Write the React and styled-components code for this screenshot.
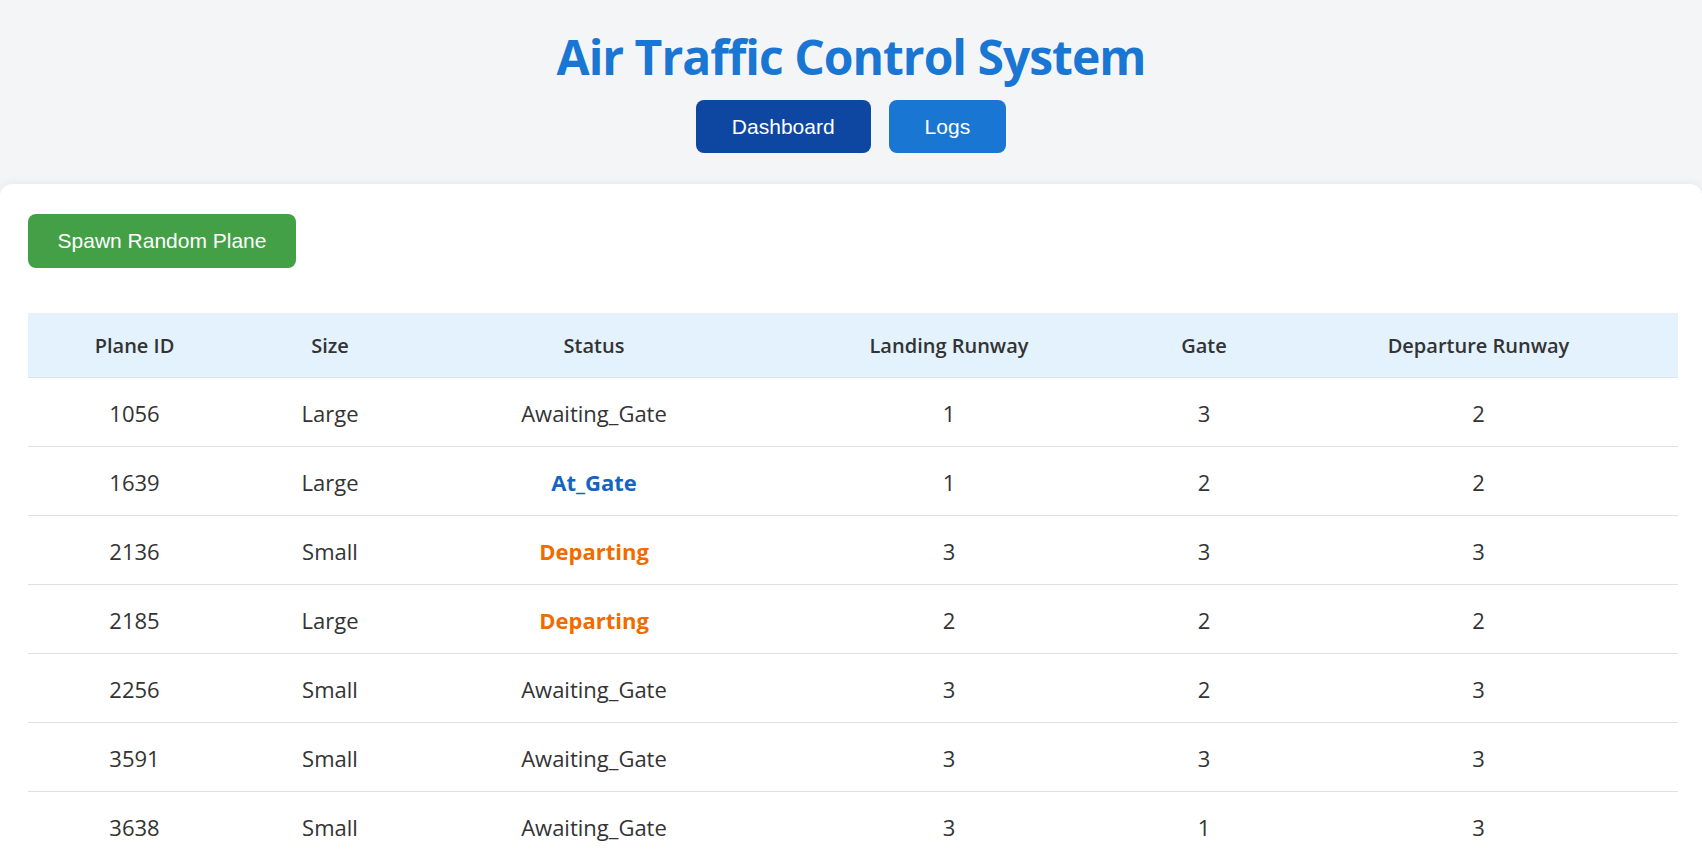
import React from "react";
import styled, { createGlobalStyle } from "styled-components";

const planes = [
  { id: 1056, size: "Large", status: "Awaiting_Gate", landing: 1, gate: 3, departure: 2 },
  { id: 1639, size: "Large", status: "At_Gate", landing: 1, gate: 2, departure: 2 },
  { id: 2136, size: "Small", status: "Departing", landing: 3, gate: 3, departure: 3 },
  { id: 2185, size: "Large", status: "Departing", landing: 2, gate: 2, departure: 2 },
  { id: 2256, size: "Small", status: "Awaiting_Gate", landing: 3, gate: 2, departure: 3 },
  { id: 3591, size: "Small", status: "Awaiting_Gate", landing: 3, gate: 3, departure: 3 },
  { id: 3638, size: "Small", status: "Awaiting_Gate", landing: 3, gate: 1, departure: 3 },
];

const columns = [
  { label: "Plane ID", width: 213 },
  { label: "Size", width: 178 },
  { label: "Status", width: 350 },
  { label: "Landing Runway", width: 360 },
  { label: "Gate", width: 150 },
  { label: "Departure Runway", width: 399 },
];

const statusColors = {
  At_Gate: "#1565c0",
  Departing: "#ef6c00",
};

const App = () => {
  return (
    <React.Fragment>
      <GlobalStyle />
      <Header>
        <Title>Air Traffic Control System</Title>
        <Nav>
          <NavButton active>Dashboard</NavButton>
          <NavButton>Logs</NavButton>
        </Nav>
      </Header>
      <Card>
        <SpawnButton>Spawn Random Plane</SpawnButton>
        <Table>
          <colgroup>
            {columns.map(c => (
              <col key={c.label} style={{ width: c.width }} />
            ))}
          </colgroup>
          <thead>
            <tr>
              {columns.map(c => (
                <HeadCell key={c.label}>{c.label}</HeadCell>
              ))}
            </tr>
          </thead>
          <tbody>
            {planes.map(p => (
              <tr key={p.id}>
                <Cell>{p.id}</Cell>
                <Cell>{p.size}</Cell>
                <Cell>
                  <Status color={statusColors[p.status]}>{p.status}</Status>
                </Cell>
                <Cell>{p.landing}</Cell>
                <Cell>{p.gate}</Cell>
                <Cell>{p.departure}</Cell>
              </tr>
            ))}
          </tbody>
        </Table>
      </Card>
    </React.Fragment>
  );
};

const GlobalStyle = createGlobalStyle`
  body {
    margin: 0;
    background: #f4f5f7;
    font-family: "Open Sans", "Noto Sans", sans-serif;
    color: #333;
  }
`;

const Header = styled("header")`
  display: flex;
  flex-direction: column;
  align-items: center;
  padding: 25px 0 31px;
`;

const Title = styled("h1")`
  margin: 0 0 11px;
  font-size: 48px;
  line-height: 64px;
  font-weight: 700;
  color: #1976d2;
  letter-spacing: -1px;
`;

const Nav = styled("nav")`
  display: flex;
  gap: 18px;
`;

const NavButton = styled("button")`
  height: 53px;
  padding: 0 36px;
  border: none;
  border-radius: 8px;
  background: ${props => (props.active ? "#0d47a1" : "#1976d2")};
  color: #fff;
  font-family: "Liberation Sans", Arial, sans-serif;
  font-size: 21px;
`;

const Card = styled("main")`
  background: #fff;
  border-radius: 12px 12px 0 0;
  box-shadow: 0 -2px 10px rgba(0, 0, 0, 0.05);
  padding: 30px 24px 40px 28px;
`;

const SpawnButton = styled("button")`
  height: 54px;
  width: 268px;
  border: none;
  border-radius: 8px;
  background: #43a047;
  color: #fff;
  font-family: "Liberation Sans", Arial, sans-serif;
  font-size: 21px;
`;

const Table = styled("table")`
  margin-top: 45px;
  width: 1650px;
  table-layout: fixed;
  border-collapse: collapse;
`;

const HeadCell = styled("th")`
  height: 64px;
  padding: 0;
  background: #e3f2fd;
  border-bottom: 1px solid #dde3ea;
  font-size: 20px;
  font-weight: 600;
  color: #333;
  text-align: center;
`;

const Cell = styled("td")`
  height: 66px;
  padding: 2px 0 0;
  border-bottom: 1px solid #e0e0e0;
  font-size: 22px;
  text-align: center;
  color: #333;
`;

const Status = styled("span")`
  color: ${props => props.color || "#333"};
  font-weight: ${props => (props.color ? 700 : 400)};
`;

export default App;
